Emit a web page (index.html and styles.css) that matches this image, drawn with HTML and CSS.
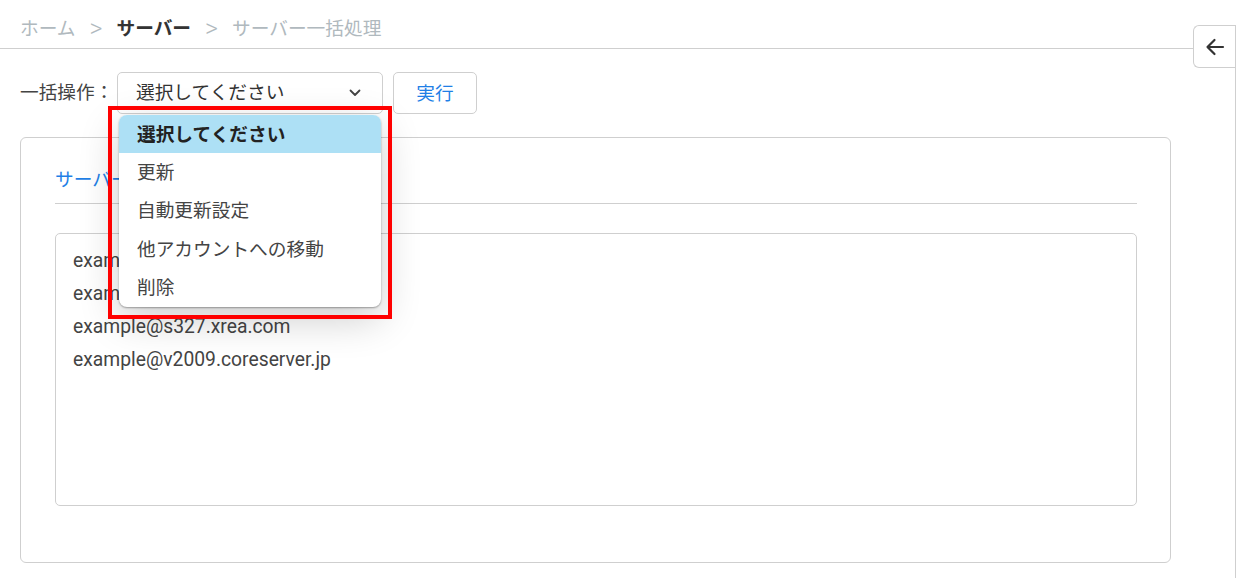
FILE: index.html
```html
<!DOCTYPE html>
<html lang="ja">
<head>
<meta charset="utf-8">
<title>サーバー一括処理</title>
<link rel="stylesheet" href="styles.css">
</head>
<body>
<div class="layout">
  <main class="main">
    <nav class="crumbs">
      <span class="crumb">ホーム</span>
      <span class="sep">&gt;</span>
      <span class="crumb current">サーバー</span>
      <span class="sep">&gt;</span>
      <span class="crumb">サーバー一括処理</span>
    </nav>
    <div class="content">
      <div class="bulk-row">
        <span class="bulk-label">一括操作：</span>
        <div class="select-wrap">
          <div class="select">
            <span class="select-text">選択してください</span>
            <svg class="chev" width="12" height="8" viewBox="0 0 12 8"><path d="M1.5 1.5 L6 6 L10.5 1.5" fill="none" stroke="#444" stroke-width="1.8" stroke-linecap="round" stroke-linejoin="round"/></svg>
          </div>
          <ul class="menu">
            <li class="menu-item active">選択してください</li>
            <li class="menu-item">更新</li>
            <li class="menu-item">自動更新設定</li>
            <li class="menu-item">他アカウントへの移動</li>
            <li class="menu-item">削除</li>
          </ul>
          <div class="highlight"></div>
        </div>
        <button class="run-btn">実行</button>
      </div>
      <section class="card">
        <div class="tabs">
          <span class="tab">サーバー一覧</span>
        </div>
        <div class="list-box">
          <div class="list-line">example@s1.xrea.com</div>
          <div class="list-line">example@m1.coreserver.jp</div>
          <div class="list-line">example@s327.xrea.com</div>
          <div class="list-line">example@v2009.coreserver.jp</div>
        </div>
      </section>
    </div>
  </main>
  <aside class="aside">
    <div class="toggle-col">
      <button class="toggle-btn" aria-label="戻る">
        <svg width="20" height="18" viewBox="0 0 20 18"><path d="M18 9 H2.5 M9.5 2 L2.5 9 L9.5 16" fill="none" stroke="#333" stroke-width="2.2" stroke-linecap="round" stroke-linejoin="round"/></svg>
      </button>
    </div>
    <div class="strip"></div>
  </aside>
</div>
</body>
</html>
```

FILE: styles.css
```css
* { box-sizing: border-box; }
html, body { margin: 0; padding: 0; background: #fff; }
body {
  font-family: Roboto, "Noto Sans CJK JP", "Noto Sans", sans-serif;
  font-size: 18.7px;
  color: #444;
  height: 578px;
  overflow: hidden;
}
.layout {
  display: flex;
  height: 578px;
}
.main {
  flex: 1;
  min-width: 0;
}
.crumbs {
  display: flex;
  align-items: center;
  height: 49px;
  padding: 11px 0 0 20px;
  border-bottom: 1px solid #cfcfcf;
  color: #b0b9be;
  line-height: 1;
}
.crumb { white-space: nowrap; }
.crumb.current { color: #333; font-weight: 700; }
.sep {
  margin: 0 14px;
  font-family: Roboto, sans-serif;
  font-size: 25px;
  font-weight: 300;
  color: #b0b9be;
  position: relative;
  top: -1px;
}
.content {
  padding: 23px 22px 0 20px;
}
.bulk-row {
  display: flex;
  align-items: center;
  height: 42px;
}
.bulk-label {
  width: 97px;
  color: #444;
  white-space: nowrap;
  padding-bottom: 6px;
}
.select-wrap {
  position: relative;
  width: 266px;
  height: 42px;
}
.select {
  display: flex;
  align-items: center;
  justify-content: space-between;
  height: 42px;
  padding: 0 21px 0 18px;
  border: 1px solid #cfcfcf;
  border-radius: 5px;
  color: #333;
  background: #fff;
}
.select-text { white-space: nowrap; padding-bottom: 6px; }
.chev { display: block; }
.menu {
  position: absolute;
  left: 2px;
  top: 43px;
  width: 262px;
  margin: 0;
  padding: 0;
  list-style: none;
  background: #fff;
  border-radius: 8px;
  overflow: hidden;
  box-shadow: 0 1px 2px rgba(0,0,0,0.35), 0 12px 40px rgba(0,0,0,0.2);
  z-index: 5;
}
.menu-item {
  height: 38.4px;
  display: flex;
  align-items: center;
  padding: 0 0 4px 18px;
  color: #444;
  white-space: nowrap;
}
.menu-item.active {
  background: #ade0f5;
  color: #222;
  font-weight: 700;
}
.highlight {
  position: absolute;
  left: -9px;
  top: 34px;
  width: 284px;
  height: 213px;
  border: 4px solid #ff0000;
  z-index: 6;
  pointer-events: none;
}
.run-btn {
  margin-left: 10px;
  width: 84px;
  height: 42px;
  border: 1px solid #cfcfcf;
  border-radius: 5px;
  background: #fff;
  color: #1f7fe6;
  font-family: inherit;
  font-size: 18.7px;
  padding: 0 0 4px 0;
}
.card {
  margin-top: 23px;
  height: 426px;
  border: 1px solid #cfcfcf;
  border-radius: 6px;
  padding: 25px 33px 0 34px;
}
.tabs {
  border-bottom: 1px solid #cfcfcf;
  padding-bottom: 8px;
}
.tab {
  display: inline-block;
  line-height: 30px;
  padding-top: 2px;
  color: #1f7fe6;
}
.list-box {
  margin-top: 29px;
  height: 273px;
  border: 1px solid #cfcfcf;
  border-radius: 5px;
  padding: 10px 17px;
}
.list-line {
  line-height: 33px;
  font-size: 19.3px;
  color: #444;
}
.aside {
  width: 57px;
  display: flex;
}
.toggle-col {
  width: 42px;
  padding-top: 25px;
}
.toggle-btn {
  display: flex;
  align-items: center;
  justify-content: center;
  width: 42px;
  height: 43px;
  padding: 0;
  border: 1px solid #cfcfcf;
  border-right: none;
  border-radius: 6px 0 0 6px;
  background: #fff;
}
.strip {
  flex: 1;
  margin-top: 25px;
  border-left: 1px solid #cfcfcf;
}
```
